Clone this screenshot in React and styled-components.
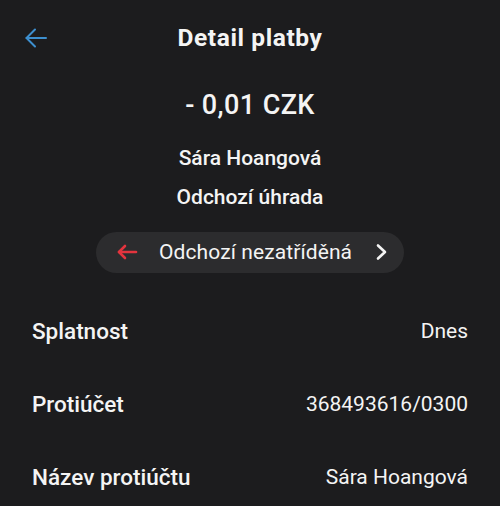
import styled, { createGlobalStyle } from "styled-components";

const GlobalStyle = createGlobalStyle`
  html, body {
    margin: 0;
    padding: 0;
    background-color: #1c1c1e;
  }
  body {
    font-family: Roboto, "Noto Sans", sans-serif;
    color: #f4f4f4;
  }
`;

const Page = styled.div`
  width: 500px;
  height: 506px;
  overflow: hidden;
  background-color: #1c1c1e;
`;

const Header = styled.div`
  display: grid;
  grid-template-columns: 72px 1fr 72px;
  align-items: center;
  height: 75px;
`;

const BackButton = styled.button`
  display: flex;
  align-items: center;
  justify-content: center;
  width: 72px;
  height: 75px;
  padding: 0;
  border: none;
  background: none;
  cursor: pointer;
`;

const Title = styled.h1`
  margin: 0;
  text-align: center;
  font-size: 24.5px;
  font-weight: 700;
  letter-spacing: 0.6px;
  line-height: 30px;
`;

const Summary = styled.div`
  display: flex;
  flex-direction: column;
  align-items: center;
`;

const Amount = styled.div`
  margin-top: 15px;
  font-size: 27px;
  font-weight: 500;
  letter-spacing: 0.4px;
  line-height: 30px;
`;

const SubLine = styled.div`
  margin-top: ${(p) => p.$gap}px;
  font-size: 21px;
  font-weight: 500;
  line-height: 26px;
`;

const Category = styled.div`
  display: flex;
  align-items: center;
  margin-top: 22px;
  width: 308px;
  height: 41px;
  box-sizing: border-box;
  padding: 0 15px 0 20px;
  border-radius: 21px;
  background-color: #2c2c2e;
  font-size: 21px;
  letter-spacing: 0.1px;
  cursor: pointer;
`;

const CategoryName = styled.span`
  flex: 1;
  padding-left: 21px;
  line-height: 26px;
`;

const Rows = styled.div`
  display: flex;
  flex-direction: column;
  padding: 22px 32px 0;
`;

const Row = styled.div`
  display: flex;
  justify-content: space-between;
  align-items: center;
  height: 73px;
`;

const Label = styled.span`
  font-size: 22.5px;
  font-weight: 500;
`;

const Value = styled.span`
  font-size: 21px;
`;

const BackArrow = () => (
  <svg width="26" height="24" viewBox="0 0 26 24" fill="none"
    stroke="#3d8fcf" strokeWidth="2" strokeLinecap="round" strokeLinejoin="round">
    <path d="M23 12H3.5" />
    <path d="M12 3.5L3.5 12l8.5 8.5" />
  </svg>
);

const OutArrow = () => (
  <svg width="22" height="16" viewBox="0 0 22 16" fill="none"
    stroke="#e3343e" strokeWidth="2.6" strokeLinecap="round" strokeLinejoin="round">
    <path d="M20 8H3" />
    <path d="M9 2L3 8l6 6" />
  </svg>
);

const Chevron = () => (
  <svg width="14" height="18" viewBox="0 0 14 18" fill="none"
    stroke="#f4f4f4" strokeWidth="2.6" strokeLinecap="round" strokeLinejoin="round">
    <path d="M3 2.5L10 9l-7 6.5" />
  </svg>
);

const details = [
  { label: "Splatnost", value: "Dnes" },
  { label: "Protiúčet", value: "368493616/0300" },
  { label: "Název protiúčtu", value: "Sára Hoangová" },
];

export default function App() {
  return (
    <Page>
      <GlobalStyle />
      <Header>
        <BackButton aria-label="Zpět">
          <BackArrow />
        </BackButton>
        <Title>Detail platby</Title>
        <span />
      </Header>
      <Summary>
        <Amount>- 0,01 CZK</Amount>
        <SubLine $gap={25}>Sára Hoangová</SubLine>
        <SubLine $gap={12.5}>Odchozí úhrada</SubLine>
        <Category>
          <OutArrow />
          <CategoryName>Odchozí nezatříděná</CategoryName>
          <Chevron />
        </Category>
      </Summary>
      <Rows>
        {details.map((d) => (
          <Row key={d.label}>
            <Label>{d.label}</Label>
            <Value>{d.value}</Value>
          </Row>
        ))}
      </Rows>
    </Page>
  );
}
